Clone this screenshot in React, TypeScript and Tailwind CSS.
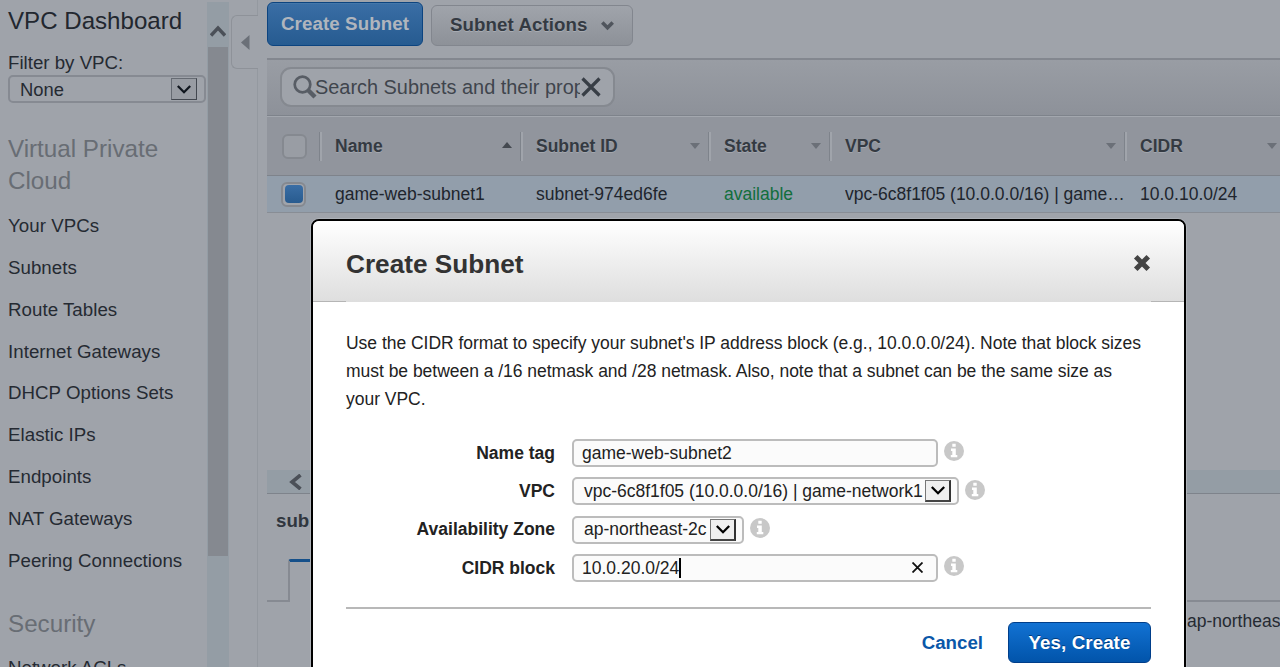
import type { ReactNode } from 'react';

const vpcLinks = [
  'Your VPCs',
  'Subnets',
  'Route Tables',
  'Internet Gateways',
  'DHCP Options Sets',
  'Elastic IPs',
  'Endpoints',
  'NAT Gateways',
  'Peering Connections',
];

const columns = [
  { label: 'Name', value: 'game-web-subnet1', width: 'w-[201px]', sort: 'asc' },
  { label: 'Subnet ID', value: 'subnet-974ed6fe', width: 'w-[188px]', sort: 'none' },
  { label: 'State', value: 'available', width: 'w-[121px]', sort: 'none' },
  { label: 'VPC', value: 'vpc-6c8f1f05 (10.0.0.0/16) | game-network1', width: 'w-[295px]', sort: 'none' },
  { label: 'CIDR', value: '10.0.10.0/24', width: 'w-[161px]', sort: 'none' },
];

function DropArrow({ dimmed = false }: { dimmed?: boolean }) {
  return (
    <span
      className={`flex h-[22px] w-[26px] shrink-0 items-center justify-center border ${
        dimmed
          ? 'border-[#666b73] border-r-[#42474f] border-b-[#42474f] bg-[#989ca3] text-[#10161e]'
          : 'border-[#777] border-r-2 border-r-[#333] border-b-2 border-b-[#444] bg-[#efefef] text-black'
      }`}
    >
      <svg className="shrink-0" width="14" height="9" viewBox="0 0 14 9" fill="none" stroke="currentColor" strokeWidth="2.3">
        <path d="M.8 1L7 7.200 13.200 1" />
      </svg>
    </span>
  );
}

function InfoIcon() {
  return (
    <svg className="mb-[3px] ml-[6px] shrink-0" width="20" height="20" viewBox="0 0 20 20">
      <circle cx="10" cy="10" r="10" fill="#c8c8c8" />
      <path d="M8.300 2.800h3.400v3H8.300zM7 7.600h4.800v6.300h1.500v2.300H6.800v-2.300h1.500V9.900H7z" fill="#fff" />
    </svg>
  );
}

function Sidebar() {
  return (
    <aside className="flex h-full w-[229px] shrink-0">
      <div className="w-[207px] overflow-hidden pl-2 text-[18.7px] text-[#252a32]">
        <h1 className="mt-[5px] text-[24.1px] leading-8 text-[#22272f]">VPC Dashboard</h1>
        <div className="mt-[14px] h-[24px] leading-6">Filter by VPC:</div>
        <div className="flex h-[28px] w-[198px] items-center justify-between rounded-[5px] border-2 border-[#868a92] pr-[7px] pl-[10px] leading-6">
          <span className="pt-px text-[18.4px]">None</span>
          <DropArrow dimmed />
        </div>
        <h2 className="mt-[30px] text-[24.2px] leading-[31.5px] text-[#686d74]">
          Virtual Private
          <br />
          Cloud
        </h2>
        <nav className="mt-[9px] tracking-[0.04px]">
          {vpcLinks.map((link) => (
            <a key={link} className="flex h-[41.9px] items-center whitespace-nowrap">
              {link}
            </a>
          ))}
        </nav>
        <h2 className="mt-[26px] text-[24.2px] leading-[31.5px] text-[#686d74]">Security</h2>
        <a className="mt-[8px] flex h-[41.9px] items-center">Network ACLs</a>
      </div>

      {/* scrollbar */}
      <div className="mt-[2px] flex w-[22px] flex-col bg-[#949da5]">
        <div className="flex h-[45px] items-center justify-center pt-[12px] text-[#4b5058]">
          <svg width="16" height="14" viewBox="0 0 16 14" fill="none" stroke="currentColor" strokeWidth="3.400">
            <path d="M1 11.500l7-7.500 7 7.500" />
          </svg>
        </div>
        <div className="ml-[1px] h-[509px] w-[20px] bg-[#858990]" />
      </div>
    </aside>
  );
}

function Gutter() {
  return (
    <div className="flex w-[38px] shrink-0 flex-col">
      <div className="h-[15px] w-[29px] border-r border-[#9499a0]" />
      <div className="ml-[2px] flex h-[54px] w-[27px] items-center rounded-l-[6px] border border-r-0 border-[#8e9299] pl-[9px]">
        <svg width="9" height="15" viewBox="0 0 9 15" fill="#6b7078">
          <path d="M0 7.500L8.500 0v15z" />
        </svg>
      </div>
      <div className="w-[29px] flex-1 border-r border-[#9499a0]" />
    </div>
  );
}

function SubnetTable() {
  return (
    <div className="w-[1013px]">
      <div className="flex h-[58px] items-center bg-[#91959d] text-[17.5px] font-bold text-[#343a42]">
        <div className="flex h-[29px] w-[53px] shrink-0 items-center border-r border-[#7e838b] pl-[15px]">
          <span className="size-[25px] rounded-[6px] border-2 border-[#858990] bg-[#999da4]" />
        </div>
        {columns.map((col, i) => (
          <div
            key={col.label}
            className={`flex h-[29px] shrink-0 items-center justify-between border-l-2 border-l-[#a0a4ab] pl-[13px] ${col.width} ${
              i < columns.length - 1 ? 'border-r border-r-[#7e838b] pr-[8px]' : 'pr-[9px]'
            }`}
          >
            <span className="[text-shadow:0_1px_0_#a3a7ae]">{col.label}</span>
            {col.sort === 'asc' ? (
              <svg className="mb-[2px]" width="10" height="6" viewBox="0 0 10 6" fill="#444950">
                <path d="M0 6l5-6 5 6z" />
              </svg>
            ) : (
              <svg width="10" height="6" viewBox="0 0 10 6" fill="#6b7078">
                <path d="M0 0l5 6 5-6z" />
              </svg>
            )}
          </div>
        ))}
      </div>
      <div className="flex h-[38px] items-center border-y border-t-[#7e838b] border-b-[#888d95] bg-[#929eab] text-[17.5px] text-[#20252d]">
        <div className="flex w-[54px] shrink-0 pl-[14px]">
          <span className="flex size-[25px] items-center justify-center rounded-[6px] border-2 border-[#858990] bg-[#a0a4ab]">
            <span className="size-[18px] rounded-[4px] bg-gradient-to-b from-[#3a6ea5] to-[#285b8f]" />
          </span>
        </div>
        {columns.map((col) => (
          <div key={col.label} className={`shrink-0 pl-[14px] ${col.width}`}>
            <div className={`truncate ${col.label === 'State' ? 'text-[#116e3c]' : ''}`}>{col.value}</div>
          </div>
        ))}
      </div>
    </div>
  );
}

function MainPanel() {
  return (
    <main className="flex w-[1013px] shrink-0 flex-col">
      <div className="flex h-[58px] shrink-0 gap-[8px] pt-[2px] font-bold">
        <button className="h-[44px] w-[156px] rounded-[6px] border border-[#0c4480] bg-gradient-to-b from-[#3a6ea5] to-[#265b90] text-[18.7px] tracking-[0.1px] text-[#b0b5bd] shadow-[inset_0_1px_0_#4577a9]">
          Create Subnet
        </button>
        <button className="mt-[3px] flex h-[41px] w-[202px] items-center justify-between rounded-[6px] border border-[#82868e] bg-gradient-to-b from-[#a0a4ab] to-[#8d9198] pr-[18px] pl-[18px] text-[18.7px] tracking-[0.08px] text-[#343a42] [text-shadow:0_1px_0_#a8acb3]">
          Subnet Actions
          <svg width="13" height="10" viewBox="0 0 13 10" fill="none" stroke="#50555d" strokeWidth="3.600">
            <path d="M1.300 1.500l5.200 5.200 5.200-5.200" />
          </svg>
        </button>
      </div>

      <div className="flex h-[59px] shrink-0 items-center border-t-2 border-b border-t-[#83878f] border-b-[#a3a7ae] bg-gradient-to-b from-[#999da4] to-[#8d9199] pl-[13px] shadow-[inset_0_-1px_0_#7e838b]">
        <div className="mb-[2px] flex h-[40px] w-[335px] items-center rounded-[11px] border-2 border-[#858990] bg-[#9fa3aa] pl-[11px]">
          <svg className="shrink-0" width="24" height="24" viewBox="0 0 24 24" fill="none" stroke="#585d65">
            <circle cx="9.500" cy="9.500" r="7.800" strokeWidth="2.700" />
            <path d="M15 15l7 7" strokeWidth="4.500" />
          </svg>
          <span className="-ml-[2px] w-[265px] shrink-0 overflow-hidden pt-px text-[19.9px] whitespace-nowrap text-[#3f454d]">
            Search Subnets and their properties
          </span>
          <svg className="ml-px shrink-0" width="20" height="20" viewBox="0 0 20 20" fill="none" stroke="#383e46" strokeWidth="3.200">
            <path d="M1.500 1.500l17 17M18.500 1.500l-17 17" />
          </svg>
        </div>
      </div>

      <SubnetTable />

      {/* horizontal scrollbar */}
      <div className="mt-[257px] flex h-[24px] shrink-0 items-center border-b border-[#7e838b] bg-[#949da5] pl-[22px]">
        <svg width="13" height="16" viewBox="0 0 13 16" fill="none" stroke="#4b5058" strokeWidth="3.600">
          <path d="M11.500 1L3 8l8.500 7" />
        </svg>
      </div>

      {/* details pane */}
      <div className="mt-[15px] h-[24px] pl-[9px] text-[18.7px] leading-6 font-bold text-[#30363e]">subnet-974ed6fe</div>
      <div className="mt-[26px] flex h-[43px] shrink-0 items-end">
        <div className="w-[21px] border-b-2 border-[#868a92]" />
        <div className="h-[43px] w-[300px] rounded-t-[3px] border-t-[3px] border-l-2 border-t-[#15508a] border-l-[#868a92]" />
        <div className="flex-1 border-b-2 border-[#868a92]" />
      </div>
      <div className="mt-[7px] pl-[920px] text-[17.5px] leading-6 whitespace-nowrap text-[#252a32]">ap-northeast-2a</div>
    </main>
  );
}

function FormRow({ label, children }: { label: string; children: ReactNode }) {
  return (
    <div className="flex h-[38.4px] items-center">
      <label className="w-[259px] pr-[17px] text-right text-[17.5px] font-bold text-[#222]">{label}</label>
      {children}
      <InfoIcon />
    </div>
  );
}

function CreateSubnetDialog() {
  return (
    <div className="absolute top-[219px] left-[311px] h-[500px] w-[875px] overflow-hidden rounded-[8px] border-2 border-black bg-white shadow-[0_0_0_1px_#aeb2b8]">
      <header className="flex h-[81px] items-center justify-between bg-gradient-to-b from-white to-[#dedede] pt-[7px] pr-[33px] pl-[33px]">
        <h2 className="text-[26.2px] font-bold text-[#333]">Create Subnet</h2>
        <svg className="mb-[4px]" width="18" height="18" viewBox="0 0 18 18" stroke="#444" strokeWidth="5" strokeLinecap="square">
          <path d="M4.500 4.500l9 9M13.500 4.500l-9 9" />
        </svg>
      </header>
      <div className="-mt-px flex h-px justify-between">
        <span className="w-[33px] bg-[#b5b5b5]" />
        <span className="w-[33px] bg-[#b5b5b5]" />
      </div>

      <p className="px-[33px] pt-[27px] text-[17.5px] leading-[28.2px] tracking-[-0.026px] whitespace-nowrap text-[#222]">
        Use the CIDR format to specify your subnet's IP address block (e.g., 10.0.0.0/24). Note that block sizes
        <br />
        must be between a /16 netmask and /28 netmask. Also, note that a subnet can be the same size as
        <br />
        your VPC.
      </p>

      <form className="mt-[20px] text-[17.5px] text-[#222]">
        <FormRow label="Name tag">
          <div className="flex h-[28px] w-[366px] items-center rounded-[5px] border-2 border-[#bcbcbc] bg-[#fbfbfb] pl-[8px]">
            game-web-subnet2
          </div>
        </FormRow>
        <FormRow label="VPC">
          <div className="flex h-[28px] w-[387px] items-center justify-between rounded-[5px] border-2 border-[#bcbcbc] bg-[#fbfbfb] pr-[6px] pl-[10px] tracking-[-0.01px] whitespace-nowrap">
            vpc-6c8f1f05 (10.0.0.0/16) | game-network1
            <DropArrow />
          </div>
        </FormRow>
        <FormRow label="Availability Zone">
          <div className="flex h-[28px] w-[172px] items-center justify-between rounded-[5px] border-2 border-[#bcbcbc] bg-[#fbfbfb] pr-[6px] pl-[10px] whitespace-nowrap">
            ap-northeast-2c
            <DropArrow />
          </div>
        </FormRow>
        <FormRow label="CIDR block">
          <div className="flex h-[28px] w-[366px] items-center rounded-[5px] border-2 border-[#bcbcbc] bg-[#fbfbfb] pr-[13px] pl-[8px]">
            10.0.20.0/24
            <span className="h-[20px] w-[1.5px] bg-black" />
            <svg className="ml-auto" width="11" height="11" viewBox="0 0 11 11" stroke="#111" strokeWidth="1.800">
              <path d="M.5.5l10 10M10.500.5l-10 10" />
            </svg>
          </div>
        </FormRow>
      </form>

      <footer className="mx-[33px] mt-[20px] flex items-center justify-end gap-[25px] border-t-2 border-[#b8b8b8] pt-[13px] text-[18.7px] font-bold">
        <a className="text-[#0a57a8]">Cancel</a>
        <button className="h-[41px] w-[143px] rounded-[6px] border border-[#003e8a] bg-gradient-to-b from-[#1272d3] to-[#0254aa] tracking-[0.1px] text-white [text-shadow:0_-1px_0_#003b7d]">
          Yes, Create
        </button>
      </footer>
    </div>
  );
}

export default function App() {
  return (
    <div className="relative flex h-[667px] w-[1280px] overflow-hidden bg-[#9fa3aa] font-['Liberation_Sans',Arial,sans-serif]">
      <Sidebar />
      <Gutter />
      <MainPanel />
      <CreateSubnetDialog />
    </div>
  );
}
